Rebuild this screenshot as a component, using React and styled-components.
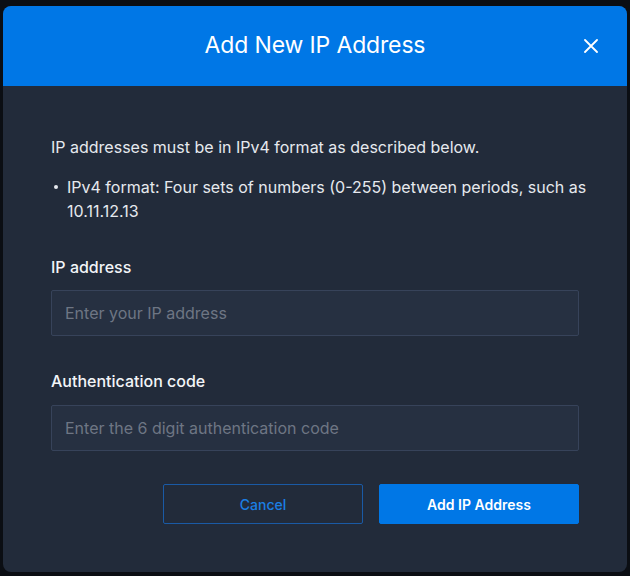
import styled, { createGlobalStyle } from "styled-components";

const Global = createGlobalStyle`
  html, body { margin: 0; padding: 0; }
  body {
    background: #0b0e13;
    font-family: Inter, "Noto Sans", sans-serif;
    -webkit-font-smoothing: antialiased;
  }
`;

export default function App() {
  return (
    <>
      <Global />
      <Backdrop>
        <Modal>
          <Header>
            <Title>Add New IP Address</Title>
            <Close aria-label="close">
              <svg width="14" height="14" viewBox="0 0 14 14">
                <path d="M1 1L13 13M13 1L1 13" stroke="#fff" strokeWidth="1.8" strokeLinecap="round" />
              </svg>
            </Close>
          </Header>
          <Body>
            <Intro>IP addresses must be in IPv4 format as described below.</Intro>
            <Bullets>
              <li>IPv4 format: Four sets of numbers (0-255) between periods, such as 10.11.12.13</li>
            </Bullets>
            <Field>
              <Label>IP address</Label>
              <Input placeholder="Enter your IP address" />
            </Field>
            <Field $last>
              <Label>Authentication code</Label>
              <Input placeholder="Enter the 6 digit authentication code" />
            </Field>
            <Actions>
              <Button>Cancel</Button>
              <Button $primary>Add IP Address</Button>
            </Actions>
          </Body>
        </Modal>
      </Backdrop>
    </>
  );
}

const Backdrop = styled.div`
  width: 630px;
  height: 576px;
  box-sizing: border-box;
  padding: 6px 3px 0 3px;
  overflow: hidden;
`;

const Modal = styled.div`
  width: 624px;
  background: #222b3a;
  border-radius: 8px;
  overflow: hidden;
  display: flex;
  flex-direction: column;
`;

const Header = styled.div`
  flex-shrink: 0;
  height: 80px;
  box-sizing: border-box;
  padding-bottom: 3px;
  background: #0077e6;
  display: flex;
  align-items: center;
  justify-content: center;
  position: relative;
`;

const Title = styled.h2`
  margin: 0;
  color: #fff;
  font-size: 23px;
  font-weight: 400;
  letter-spacing: -0.15px;
`;

const Close = styled.button`
  all: unset;
  position: absolute;
  right: 29px;
  top: 33px;
  width: 14px;
  height: 14px;
  display: flex;
`;

const Body = styled.div`
  padding: 49px 48px 48px 48px;
  color: #e6e9ee;
  font-size: 16px;
  line-height: 24px;
`;

const Intro = styled.p`
  margin: 0 0 16px 0;
`;

const Bullets = styled.ul`
  margin: 0 -20px 32px 0;
  padding: 0 0 0 16px;
  list-style: none;
  li {
    position: relative;
  }
  li::before {
    content: "";
    position: absolute;
    left: -13px;
    top: 10px;
    width: 4px;
    height: 4px;
    border-radius: 50%;
    background: #e6e9ee;
  }
`;

const Field = styled.div`
  display: flex;
  flex-direction: column;
  margin-bottom: 33px;
  label {
    margin-bottom: ${(p) => (p.$last ? "12px" : "11px")};
  }
`;

const Label = styled.label`
  font-weight: 500;
  color: #f3f5f8;
`;

const Input = styled.input`
  box-sizing: border-box;
  height: 46px;
  width: 100%;
  background: #263041;
  border: 1px solid #37435a;
  border-radius: 2px;
  padding: 0 13px;
  font-family: Inter, sans-serif;
  font-size: 16px;
  color: #e6e9ee;
  outline: none;
  &::placeholder {
    color: #6e7684;
  }
`;

const Actions = styled.div`
  display: flex;
  justify-content: flex-end;
  gap: 16px;
`;

const Button = styled.button`
  box-sizing: border-box;
  width: 200px;
  height: 40px;
  border-radius: 2px;
  font-family: Inter, sans-serif;
  font-size: 14px;
  font-weight: ${(p) => (p.$primary ? 600 : 500)};
  cursor: pointer;
  background: ${(p) => (p.$primary ? "#0077e6" : "transparent")};
  color: ${(p) => (p.$primary ? "#fff" : "#1b7fe3")};
  border: 1px solid ${(p) => (p.$primary ? "#0077e6" : "#1a5aa5")};
`;
